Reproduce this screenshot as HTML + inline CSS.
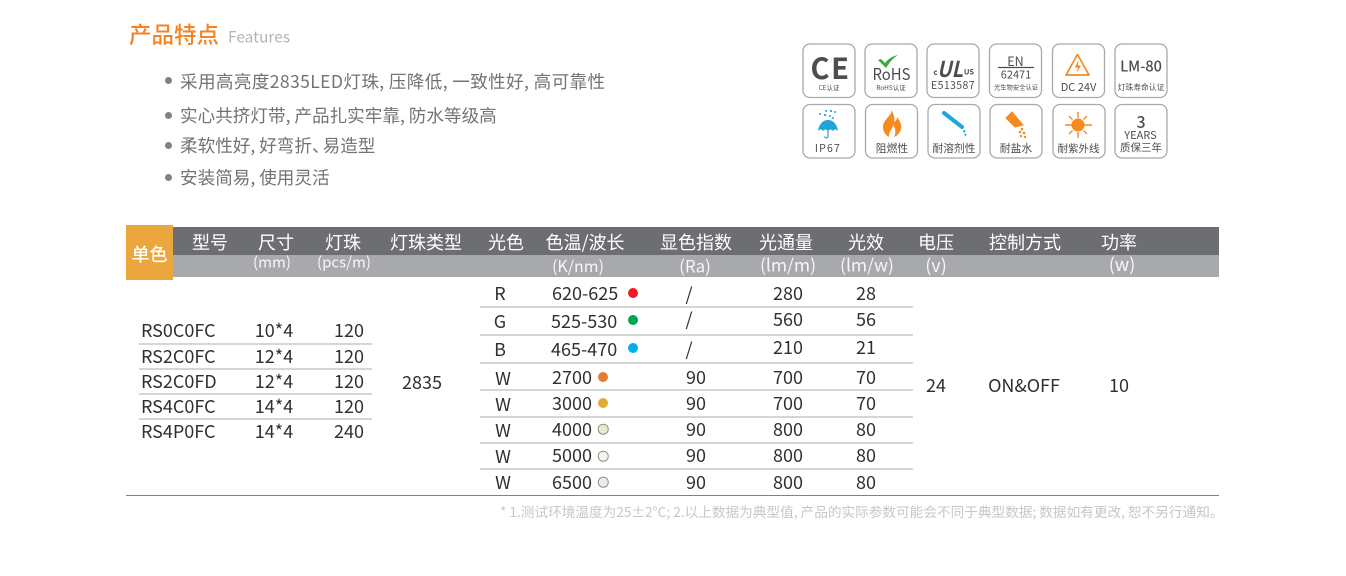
<!DOCTYPE html>
<html lang="zh">
<head>
<meta charset="utf-8">
<title>产品特点</title>
<style>
html,body{margin:0;padding:0;background:#fff}
body{position:relative;width:1346px;height:576px;overflow:hidden;font-family:"Noto Sans CJK SC","Liberation Sans",sans-serif;color:#333}
.t,.l{position:absolute;white-space:nowrap;line-height:1}
.t{transform:translate(-50%,-50%);font-size:18px;color:#2f2f31}
.l{transform:translateY(-50%);font-size:18px;color:#2f2f31}
.h{color:#fff;font-size:18px}
.u{color:#f6f6f7;font-size:16px}
.f{font-size:17.6px;color:#727376}
.b{position:absolute;width:7px;height:7px;border-radius:50%;background:#808285;left:165px}
.r{position:absolute;height:1.5px;background:#d5d6d8}
.d{position:absolute;width:10px;height:10px;border-radius:50%;transform:translate(-50%,-50%)}
.o{width:8.5px;height:8.5px;border:1px solid #8a8c8e}
svg{position:absolute;left:0;top:0}
svg text{font-family:"Noto Sans CJK SC","Liberation Sans",sans-serif;fill:#4d4d4f;text-anchor:middle}
</style>
</head>
<body>
<div class="l" style="left:129px;top:34px;font-size:22.5px;color:#f58220;font-weight:500">产品特点</div>
<div class="l" style="left:228px;top:36.500px;font-size:15.500px;color:#b3b4b6">Features</div>

<div class="b" style="top:77px"></div><div class="l f" style="left:180px;top:82px;letter-spacing:.36px">采用高亮度2835LED灯珠, 压降低, 一致性好, 高可靠性</div>
<div class="b" style="top:112px"></div><div class="l f" style="left:180px;top:116px">实心共挤灯带, 产品扎实牢靠, 防水等级高</div>
<div class="b" style="top:142px"></div><div class="l f" style="left:180px;top:146px">柔软性好, 好弯折<span style="letter-spacing:-7px">、</span>易造型</div>
<div class="b" style="top:174px"></div><div class="l f" style="left:180px;top:178px">安装简易, 使用灵活</div>

<svg width="1346" height="576" viewBox="0 0 1346 576">
<g fill="#fff" stroke="#a7a9ac" stroke-width="1.3">
<rect x="803" y="44" width="52" height="53.5" rx="7"/><rect x="865" y="44" width="52" height="53.5" rx="7"/><rect x="927" y="44" width="52" height="53.5" rx="7"/><rect x="989.500" y="44" width="52" height="53.5" rx="7"/><rect x="1052.500" y="44" width="52" height="53.5" rx="7"/><rect x="1115" y="44" width="52" height="53.5" rx="7"/>
<rect x="803" y="104.500" width="52" height="53.5" rx="7"/><rect x="865.500" y="104.500" width="52" height="53.5" rx="7"/><rect x="928" y="104.500" width="52" height="53.5" rx="7"/><rect x="990" y="104.500" width="52" height="53.5" rx="7"/><rect x="1053" y="104.500" width="52" height="53.5" rx="7"/><rect x="1115" y="104.500" width="52" height="53.5" rx="7"/>
</g>
<text x="820" y="79" font-size="29" font-weight="700">C</text><text x="840" y="79" font-size="29" font-weight="700">E</text>
<text x="829" y="90" font-size="6.500">CE认证</text>
<path d="M878 60l3-1 4 4c3-4 8-7 13-8-5 3-9 8-12 13z" fill="#3aa935"/>
<text x="891.500" y="80" font-size="16" textLength="38" lengthAdjust="spacingAndGlyphs">RoHS</text>
<text x="891" y="90" font-size="6.500">RoHS认证</text>
<text x="935.500" y="75" font-size="8" font-weight="700">c</text>
<text x="950" y="77" font-size="22" font-weight="700" font-style="italic" textLength="26" lengthAdjust="spacingAndGlyphs">UL</text>
<text x="969" y="74.500" font-size="7.500" font-weight="700">US</text>
<text x="953" y="89" font-size="10.500" letter-spacing=".4">E513587</text>
<text x="1015.500" y="66" font-size="12.500">EN</text>
<path d="M998 67.500h36" stroke="#4d4d4f" stroke-width="1.2"/>
<text x="1016" y="78.500" font-size="11">62471</text>
<text x="1016" y="89.500" font-size="6.300">光生物安全认证</text>
<path d="M1077.500 54.500l11.500 20.500h-23z" fill="none" stroke="#f08a24" stroke-width="1.700" stroke-linejoin="round"/>
<path d="M1078.500 60l-3.500 7.500h3l-1.500 5.500 4.500-7.500h-3z" fill="#f08a24"/>
<text x="1078.500" y="91" font-size="11">DC 24V</text>
<text x="1141" y="71.500" font-size="14.500" font-weight="500">LM-80</text>
<text x="1141" y="90" font-size="7.800">灯珠寿命认证</text>

<path d="M818 131c1-7 5-11 10-11s9 4 10 11c-2-2-3.500-2-5 0-1.500-2-3.500-2-5 0-1.500-2-3.500-2-5 0-1.500-2-3-2-5 0z" fill="#1ea5dc"/>
<path d="M828 130v6c0 2.500-3 2.500-3.500.5" fill="none" stroke="#1ea5dc" stroke-width="1.200"/>
<g fill="#1ea5dc"><circle cx="826" cy="111" r="1"/><circle cx="831" cy="111" r="1.100"/><circle cx="835" cy="112" r="1"/><circle cx="820" cy="114" r="1"/><circle cx="825" cy="115" r="1.100"/><circle cx="830" cy="116" r="1"/><circle cx="833" cy="118" r="1"/></g>
<text x="828" y="152" font-size="10.500" letter-spacing="1.200">IP67</text>
<path d="M891 110C894 114 895 118 894 122C896 121 897 119 897 117C900 121 902 125 901 129C900 133 897 136 894 137C896 133 896 129 893 125C892 130 889 131 889 137C885 135 883 131 883 127C883 122 886 120 888 117C890 115 892 113 891 110Z" fill="#f58a1f"/>
<text x="892" y="152" font-size="10.800">阻燃性</text>
<path d="M944 113l18 14" stroke="#1ea5dc" stroke-width="4" stroke-linecap="round"/>
<path d="M963.500 130.500l1.500 1.500M965 134l1 1.500" stroke="#1ea5dc" stroke-width="2"/>
<text x="954" y="152" font-size="10.800">耐溶剂性</text>
<path d="M1006 118l6-6 11 13-8 2z" fill="#f58a1f" stroke="#f58a1f" stroke-width="1" stroke-linejoin="round"/>
<g fill="#f58a1f"><circle cx="1022" cy="129" r="1.300"/><circle cx="1020" cy="132" r="1.300"/><circle cx="1024" cy="133" r="1.300"/><circle cx="1021" cy="136" r="1.200"/><circle cx="1025" cy="137" r="1.200"/></g>
<text x="1016" y="152" font-size="10.800">耐盐水</text>
<circle cx="1078" cy="125" r="6.500" fill="#f58a1f"/>
<path d="M1078 112v6M1078 132v6M1065 125h7M1084 125h8M1069 116l3.500 3.500M1083.500 130.500l3.500 3.500M1087 116l-3.500 3.500M1072.500 130.500l-3.500 3.500" stroke="#f58a1f" stroke-width="1.400"/>
<text x="1078.500" y="152" font-size="10.500">耐紫外线</text>
<text x="1141" y="128" font-size="16" font-weight="500">3</text>
<text x="1140.500" y="139" font-size="11">YEARS</text>
<text x="1141" y="151" font-size="10.500">质保三年</text>
</svg>

<div style="position:absolute;left:173px;top:227px;width:1046px;height:28px;background:#6d6e71"></div>
<div style="position:absolute;left:173px;top:255px;width:1046px;height:22px;background:#a7a9ac"></div>
<div style="position:absolute;left:126px;top:225px;width:47px;height:55px;background:#eca63e"></div>
<div class="t" style="left:149.500px;top:254px;color:#fff;font-size:18px;font-weight:500">单色</div>

<div class="t h" style="left:210px;top:242px">型号</div>
<div class="t h" style="left:276px;top:242px">尺寸</div>
<div class="t h" style="left:343px;top:242px">灯珠</div>
<div class="t h" style="left:426px;top:242px">灯珠类型</div>
<div class="t h" style="left:506px;top:242px">光色</div>
<div class="t h" style="left:585px;top:242px">色温/波长</div>
<div class="t h" style="left:696px;top:242px">显色指数</div>
<div class="t h" style="left:786px;top:242px">光通量</div>
<div class="t h" style="left:866px;top:242px">光效</div>
<div class="t h" style="left:936px;top:242px">电压</div>
<div class="t h" style="left:1025px;top:242px">控制方式</div>
<div class="t h" style="left:1119px;top:242px">功率</div>

<div class="t u" style="left:272px;top:262px;font-size:15px">(mm)</div>
<div class="t u" style="left:344px;top:262px;font-size:15px">(pcs/m)</div>
<div class="t u" style="left:578px;top:265px">(K/nm)</div>
<div class="t u" style="left:695px;top:265px;font-size:17px">(Ra)</div>
<div class="t u" style="left:788px;top:265px;font-size:17.500px">(lm/m)</div>
<div class="t u" style="left:867px;top:265px;font-size:17.500px">(lm/w)</div>
<div class="t u" style="left:936px;top:265px;font-size:18px">(v)</div>
<div class="t u" style="left:1122px;top:264px;font-size:18px">(w)</div>

<div class="r" style="left:139px;top:343px;width:233px"></div>
<div class="r" style="left:139px;top:368px;width:233px"></div>
<div class="r" style="left:139px;top:393px;width:233px"></div>
<div class="r" style="left:139px;top:418px;width:233px"></div>
<div class="r" style="left:480px;top:306px;width:433px"></div>
<div class="r" style="left:480px;top:334px;width:433px"></div>
<div class="r" style="left:480px;top:362px;width:433px"></div>
<div class="r" style="left:480px;top:389px;width:433px"></div>
<div class="r" style="left:480px;top:416px;width:433px"></div>
<div class="r" style="left:480px;top:442px;width:433px"></div>
<div class="r" style="left:480px;top:468px;width:433px"></div>
<div class="r" style="left:126px;top:495px;width:1093px;height:1px;background:#808285"></div>

<div class="l" style="left:141px;top:330px">RS0C0FC</div><div class="t" style="left:274px;top:330px">10*4</div><div class="t" style="left:349px;top:330px">120</div>
<div class="l" style="left:141px;top:356px">RS2C0FC</div><div class="t" style="left:274px;top:356px">12*4</div><div class="t" style="left:349px;top:356px">120</div>
<div class="l" style="left:141px;top:381px">RS2C0FD</div><div class="t" style="left:274px;top:381px">12*4</div><div class="t" style="left:349px;top:381px">120</div>
<div class="l" style="left:141px;top:406px">RS4C0FC</div><div class="t" style="left:274px;top:406px">14*4</div><div class="t" style="left:349px;top:406px">120</div>
<div class="l" style="left:141px;top:431px">RS4P0FC</div><div class="t" style="left:274px;top:431px">14*4</div><div class="t" style="left:349px;top:431px">240</div>
<div class="t" style="left:422px;top:382px">2835</div>
<div class="t" style="left:936px;top:384.500px">24</div>
<div class="t" style="left:1024px;top:384.500px">ON&amp;OFF</div>
<div class="t" style="left:1119px;top:384.500px">10</div>

<div class="t" style="left:500px;top:293px">R</div><div class="l" style="left:552px;top:293px">620-625</div><div class="d" style="left:633px;top:293px;background:#ed1c24"></div><div class="t" style="left:689px;top:294px">/</div><div class="t" style="left:788px;top:293px">280</div><div class="t" style="left:866px;top:293px">28</div>
<div class="t" style="left:500px;top:321px">G</div><div class="l" style="left:551px;top:321px">525-530</div><div class="d" style="left:633px;top:320px;background:#00a651"></div><div class="t" style="left:689px;top:319px">/</div><div class="t" style="left:788px;top:319px">560</div><div class="t" style="left:866px;top:319px">56</div>
<div class="t" style="left:500px;top:349px">B</div><div class="l" style="left:551px;top:349px">465-470</div><div class="d" style="left:633px;top:348px;background:#00aeef"></div><div class="t" style="left:689px;top:349px">/</div><div class="t" style="left:788px;top:347px">210</div><div class="t" style="left:866px;top:347px">21</div>
<div class="t" style="left:503px;top:378px">W</div><div class="l" style="left:552px;top:377px">2700</div><div class="d" style="left:603px;top:377px;background:#e67e30"></div><div class="t" style="left:696px;top:377px">90</div><div class="t" style="left:788px;top:377px">700</div><div class="t" style="left:866px;top:377px">70</div>
<div class="t" style="left:503px;top:403.500px">W</div><div class="l" style="left:552px;top:403px">3000</div><div class="d" style="left:603px;top:403px;background:#e0ab36"></div><div class="t" style="left:696px;top:403px">90</div><div class="t" style="left:788px;top:403px">700</div><div class="t" style="left:866px;top:403px">70</div>
<div class="t" style="left:503px;top:429.500px">W</div><div class="l" style="left:552px;top:429px">4000</div><div class="d o" style="left:603px;top:429px;background:#e9ebc8"></div><div class="t" style="left:696px;top:429px">90</div><div class="t" style="left:788px;top:429px">800</div><div class="t" style="left:866px;top:429px">80</div>
<div class="t" style="left:503px;top:455.500px">W</div><div class="l" style="left:552px;top:455px">5000</div><div class="d o" style="left:603px;top:456px;background:#f5f6ec"></div><div class="t" style="left:696px;top:455px">90</div><div class="t" style="left:788px;top:455px">800</div><div class="t" style="left:866px;top:455px">80</div>
<div class="t" style="left:503px;top:482px">W</div><div class="l" style="left:552px;top:482px">6500</div><div class="d o" style="left:603px;top:482px;background:#e8edec"></div><div class="t" style="left:696px;top:482px">90</div><div class="t" style="left:788px;top:482px">800</div><div class="t" style="left:866px;top:482px">80</div>

<div class="l" style="left:500px;top:512px;font-size:13.650px;color:#c6c7c9">* 1.测试环境温度为25±2°C; 2.以上数据为典型值, 产品的实际参数可能会不同于典型数据; 数据如有更改, 恕不另行通知。</div>
</body>
</html>
